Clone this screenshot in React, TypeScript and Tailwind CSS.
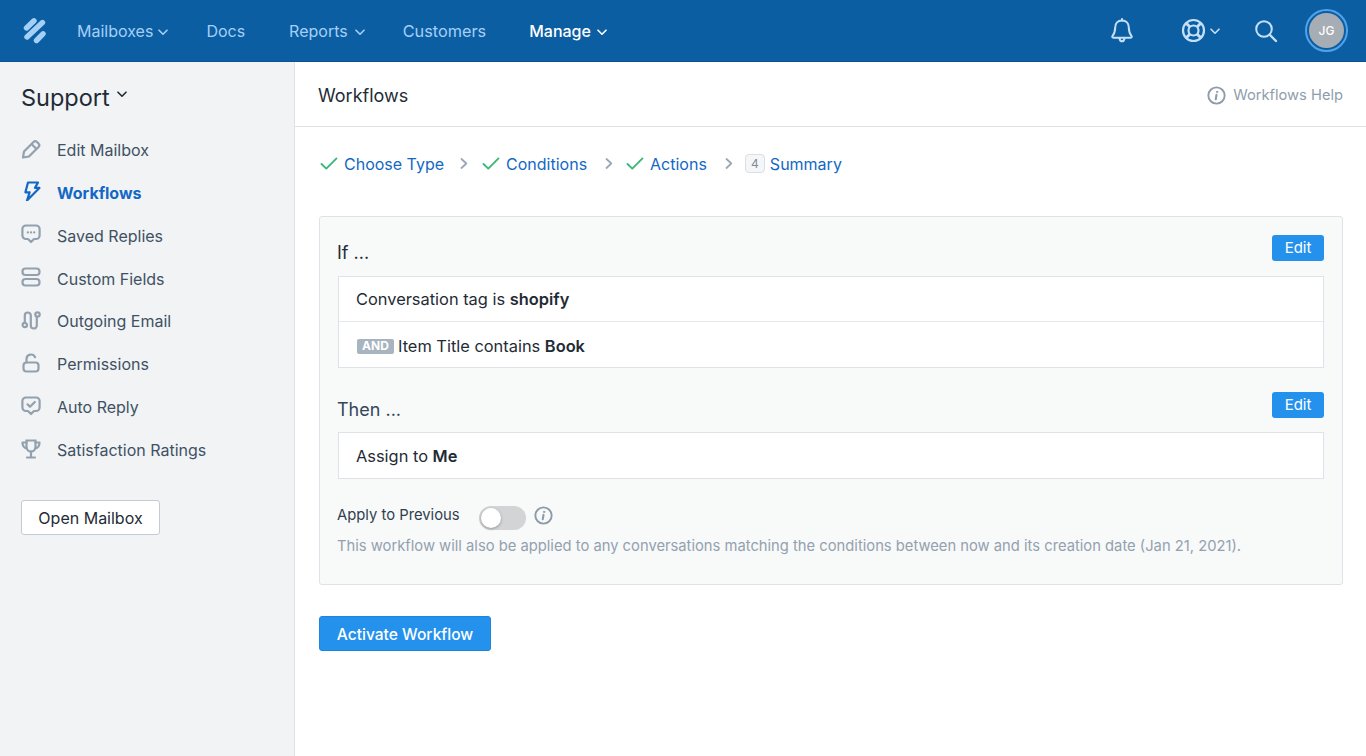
import React from "react";

const font = { fontFamily: "Inter, 'Liberation Sans', sans-serif" };

function Chevron({ className }: { className?: string }) {
  return (
    <svg className={className} width="10" height="7" viewBox="0 0 10 7" fill="none" stroke="currentColor" strokeWidth="1.6" strokeLinecap="round" strokeLinejoin="round">
      <path d="M1 1.2 5 5.2 9 1.2" />
    </svg>
  );
}

function Check() {
  return (
    <svg width="18" height="13" viewBox="0 0 18 13" fill="none" stroke="#3cb878" strokeWidth="1.9" strokeLinecap="round" strokeLinejoin="round">
      <path d="M1.5 7 6.3 11.6 16.5 1.4" />
    </svg>
  );
}

function Sep() {
  return (
    <svg width="8" height="11" viewBox="0 0 8 11" fill="none" stroke="#9aa7b5" strokeWidth="1.8" strokeLinecap="round" strokeLinejoin="round">
      <path d="M1.5 1 6.3 5.5 1.5 10" />
    </svg>
  );
}

function InfoIcon({ size = 20 }: { size?: number }) {
  return (
    <svg width={size} height={size} viewBox="0 0 20 20" fill="none" stroke="#8d9cab" strokeWidth="2" strokeLinecap="round">
      <circle cx="10" cy="10" r="8.6" />
      <path d="M10 9.2 9.2 14" strokeWidth="2.2" />
      <circle cx="10.6" cy="6.2" r="0.7" fill="#8d9cab" strokeWidth="1" />
    </svg>
  );
}

const navIcons: Record<string, React.ReactNode> = {
  edit: (
    <g strokeLinejoin="round">
      <path d="M3 12.500 12.500 3a2.500 2.500 0 0 1 3.500 0l1.500 1.500a2.500 2.500 0 0 1 0 3.500L8 17.500 2 18.500z" />
      <path d="M10.500 5 15.500 10" />
    </g>
  ),
  bolt: <path d="M7 1.500h10l-3 5.400h4.400L6 19.500l2.600-8.200H4.400z" strokeLinejoin="round" />,
  reply: <g><path d="M5 1.500h10a3.600 3.600 0 0 1 3.600 3.600v6.300a3.600 3.600 0 0 1-3.600 3.600h-2L10 18l-3-3H5a3.600 3.600 0 0 1-3.600-3.600V5.100A3.600 3.600 0 0 1 5 1.500z" strokeLinejoin="round" /><path d="M6.800 8.400h.1M10 8.400h.1M13.200 8.400h.1" strokeLinecap="round" /></g>,
  fields: <g><rect x="1.500" y="1.500" width="17" height="6.500" rx="3" /><rect x="1.500" y="12" width="17" height="6.500" rx="3" /></g>,
  outgoing: <g><circle cx="3.800" cy="15" r="2.200" /><circle cx="16.500" cy="4.500" r="2.200" /><path d="M3.800 12.500V5.500a3 3 0 0 1 6 0v10a3 3 0 0 0 6 0V7" /></g>,
  lock: <g><rect x="2.500" y="9.500" width="15" height="9" rx="3" /><path d="M5.500 9.500V6a4.500 4.500 0 0 1 8.600-1.800" strokeLinecap="round" /></g>,
  auto: <g><path d="M5 1.500h10a3.600 3.600 0 0 1 3.600 3.600v6.300a3.600 3.600 0 0 1-3.600 3.600h-2L10 18l-3-3H5a3.600 3.600 0 0 1-3.600-3.600V5.100A3.600 3.600 0 0 1 5 1.500z" strokeLinejoin="round" /><path d="M6.500 8.300 9 10.800 13.800 6" strokeLinecap="round" strokeLinejoin="round" /></g>,
  trophy: <g><path d="M5.500 1.500h9v6.500a4.500 4.500 0 0 1-9 0z" /><path d="M5.500 3.500H1.500c0 3.500 1.500 5.500 4.500 6M14.500 3.500h4c0 3.500-1.500 5.500-4.500 6M10 12.500v5.500M6 18.500h8" strokeLinecap="round" strokeLinejoin="round" /></g>,
};

function NavIcon({ name, active }: { name: string; active?: boolean }) {
  return (
    <svg width="20" height="20" viewBox="0 0 20 20" fill="none" stroke={active ? "#1268c4" : "#93a1af"} strokeWidth="2.200">
      {navIcons[name]}
    </svg>
  );
}

const items = [
  ["edit", "Edit Mailbox"],
  ["bolt", "Workflows"],
  ["reply", "Saved Replies"],
  ["fields", "Custom Fields"],
  ["outgoing", "Outgoing Email"],
  ["lock", "Permissions"],
  ["auto", "Auto Reply"],
  ["trophy", "Satisfaction Ratings"],
];

function EditButton() {
  return (
    <button className="flex h-[26px] w-[52px] items-center justify-center rounded-[3px] bg-[#2491ed] text-[15px] text-white">
      Edit
    </button>
  );
}

function Step({ label, done = true, num }: { label: string; done?: boolean; num?: string }) {
  return (
    <div className="flex items-center">
      {done ? (
        <span className="ml-[1px] mr-[6px] flex"><Check /></span>
      ) : (
        <span className="mr-[5px] flex h-[19px] w-[20px] items-center justify-center rounded-[4px] border border-[#d9dfe5] bg-[#f4f6f7] text-[12px] text-[#7f8c99]">{num}</span>
      )}
      <span className="text-[16px] text-[#1268c4]">{label}</span>
    </div>
  );
}

export default function App() {
  return (
    <div className="flex h-[756px] w-[1366px] flex-col overflow-hidden bg-white text-[#1f2b36]" style={font}>
      <header className="flex h-[62px] shrink-0 items-center border-b border-[#0b5294] bg-[#0c5ea2]">
        <svg className="ml-[23px]" width="23" height="27" viewBox="0 0 23 27" fill="none" stroke="#a4d0f7" strokeWidth="5.400" strokeLinecap="round">
          <path d="M3.500 11 11 3.800" />
          <path d="M4 20 19.500 5.500" />
          <path d="M13.500 23.500 20 16.800" />
        </svg>
        <nav className="ml-[31px] flex items-center text-[16px] text-[#a4d0f7]">
          <span className="flex items-center">Mailboxes<Chevron className="ml-[5px] mt-[3px]" /></span>
          <span className="ml-[38px]">Docs</span>
          <span className="ml-[44px] flex items-center">Reports<Chevron className="ml-[7px] mt-[3px]" /></span>
          <span className="ml-[38px] mt-[2px] text-[16.300px]">Customers</span>
          <span className="ml-[43px] flex items-center font-medium text-white">Manage<Chevron className="ml-[6px] mt-[3px]" /></span>
        </nav>
        <div className="ml-auto flex items-center text-[#c4e0f9]">
          <svg width="24" height="26" viewBox="0 0 24 26" fill="none" stroke="currentColor" strokeWidth="2" strokeLinejoin="round" strokeLinecap="round">
            <path d="M12 2.500c-4.200 0-6.800 3-6.800 7 0 4.500-1 6.500-3 9 0 .8.500 1.300 1.500 1.300h16.600c1 0 1.500-.5 1.500-1.300-2-2.500-3-4.500-3-9 0-4-2.600-7-6.800-7z" />
            <path d="M9.500 20.500c.3 1.800 1.200 2.800 2.500 2.800s2.200-1 2.500-2.800" />
            <path d="M12 1v1.500" />
          </svg>
          <svg className="ml-[47px]" width="25" height="25" viewBox="0 0 25 25" fill="none" stroke="currentColor" strokeWidth="2.200">
            <circle cx="12.500" cy="12.500" r="10.500" />
            <circle cx="12.500" cy="12.500" r="5" />
            <path d="M5 5l4 4M20 5l-4 4M5 20l4-4M20 20l-4-4" strokeWidth="3" />
          </svg>
          <Chevron className="ml-[4px] mt-[1px]" />
          <svg className="ml-[34px]" width="24" height="24" viewBox="0 0 24 24" fill="none" stroke="currentColor" strokeWidth="2" strokeLinecap="round">
            <circle cx="10" cy="10" r="7.800" />
            <path d="M16 16l6 6" strokeWidth="2.400" />
          </svg>
          <div className="ml-[27px] mr-[18px] flex h-[43px] w-[43px] items-center justify-center rounded-full border-2 border-[#4ea3ec] p-[2px]">
            <div className="flex h-full w-full items-center justify-center rounded-full bg-[#a6adb4] text-[12px] font-medium text-white">JG</div>
          </div>
        </div>
      </header>

      <div className="flex min-h-0 flex-1">
        <aside className="w-[295px] shrink-0 border-r border-[#dfe3e8] bg-[#f1f3f5] pl-[21px]">
          <div className="mt-[21px] flex h-[30px] items-center text-[23.500px] text-[#1f2b36]">
            Support
            <Chevron className="mb-[7px] ml-[7px] text-[#1f2b36]" />
          </div>
          <ul className="mt-[15.600px] flex flex-col">
            {items.map(([icon, label]) => {
              const active = label === "Workflows";
              return (
                <li key={label} className="flex h-[42.860px] items-center">
                  <span className="mb-[3px] flex w-[36px] shrink-0"><NavIcon name={icon} active={active} /></span>
                  <span className={active ? "text-[16px] font-bold text-[#1268c4]" : "text-[16px] text-[#3f5163]"}>{label}</span>
                </li>
              );
            })}
          </ul>
          <button className="mt-[28.400px] flex h-[35px] w-[139px] items-center justify-center rounded-[3px] border border-[#c3ccd4] bg-white pt-[1px] text-[16px] text-[#1f2b36]">
            Open Mailbox
          </button>
        </aside>

        <main className="min-w-0 flex-1">
          <div className="flex h-[65px] items-center justify-between border-b border-[#dfe3e8] pl-[23px] pr-[23px]">
            <h1 className="mt-[3px] text-[18px] text-[#1f2b36]">Workflows</h1>
            <div className="mt-[3px] flex items-center text-[14.700px] text-[#8f9dab]">
              <span className="mr-[7px] flex"><InfoIcon size={19} /></span>
              Workflows Help
            </div>
          </div>

          <div className="pl-[24px] pr-[23px]">
            <div className="mt-[25px] flex h-[23px] items-center">
              <Step label="Choose Type" />
              <span className="ml-[16px] mr-[13px] flex"><Sep /></span>
              <Step label="Conditions" />
              <span className="ml-[18px] mr-[12px] flex"><Sep /></span>
              <Step label="Actions" />
              <span className="ml-[18px] mr-[12px] flex"><Sep /></span>
              <Step label="Summary" done={false} num="4" />
            </div>

            <section className="mt-[41px] h-[369px] rounded-[3px] border border-[#dfe3e8] bg-[#f8f9f9] pl-[18px] pr-[18px]">
              <div className="flex items-start justify-between pt-[18px]">
                <div className="-ml-[1px] mt-[6px] text-[18px] leading-[24px] text-[#1f2b36]">If ...</div>
                <EditButton />
              </div>
              <div className="mt-[11px] border border-[#dfe3e8] bg-white text-[16.400px] text-[#1f2b36]">
                <div className="flex h-[45px] items-center border-b border-[#e6e9ec] pl-[17px]">
                  Conversation tag is&nbsp;<b className="font-semibold">shopify</b>
                </div>
                <div className="flex h-[45px] items-center pl-[18px] pt-[3px]">
                  <span className="mr-[4px] flex h-[15px] w-[37px] items-center justify-center rounded-[2px] bg-[#a8b4c0] text-[12px] font-bold text-white">AND</span>
                  Item Title contains&nbsp;<b className="font-semibold">Book</b>
                </div>
              </div>
              <div className="flex items-start justify-between pt-[24px]">
                <div className="-ml-[1px] mt-[6px] text-[18px] leading-[24px] text-[#33475b]">Then ...</div>
                <EditButton />
              </div>
              <div className="mt-[10px] flex h-[47px] items-center border border-[#dfe3e8] bg-white pl-[17px] pt-[2px] text-[16.400px] text-[#1f2b36]">
                Assign to&nbsp;<b className="font-semibold">Me</b>
              </div>
              <div className="mt-[27px] flex h-[24px] items-center">
                <span className="-ml-[1px] mb-[6px] text-[14.800px] text-[#2f3f4f]">Apply to Previous</span>
                <span className="relative ml-[19px] h-[24px] w-[47px] rounded-full bg-[#d2d4d6]">
                  <span className="absolute left-[2px] top-[2px] h-[20px] w-[20px] rounded-full bg-white shadow-[0_1px_3px_rgba(0,0,0,0.3)]" />
                </span>
                <span className="mb-[6px] ml-[8px] flex"><InfoIcon size={19} /></span>
              </div>
              <p className="-ml-[1px] mt-[5px] text-[14.760px] leading-[22px] text-[#93a1af]">
                This workflow will also be applied to any conversations matching the conditions between now and its creation date (Jan 21, 2021).
              </p>
            </section>

            <button className="mt-[31px] flex h-[35px] w-[172px] items-center justify-center rounded-[3px] border border-[#1e85de] bg-[#2491ed] pt-[2px] text-[15.600px] font-medium text-white">
              Activate Workflow
            </button>
          </div>
        </main>
      </div>
    </div>
  );
}
